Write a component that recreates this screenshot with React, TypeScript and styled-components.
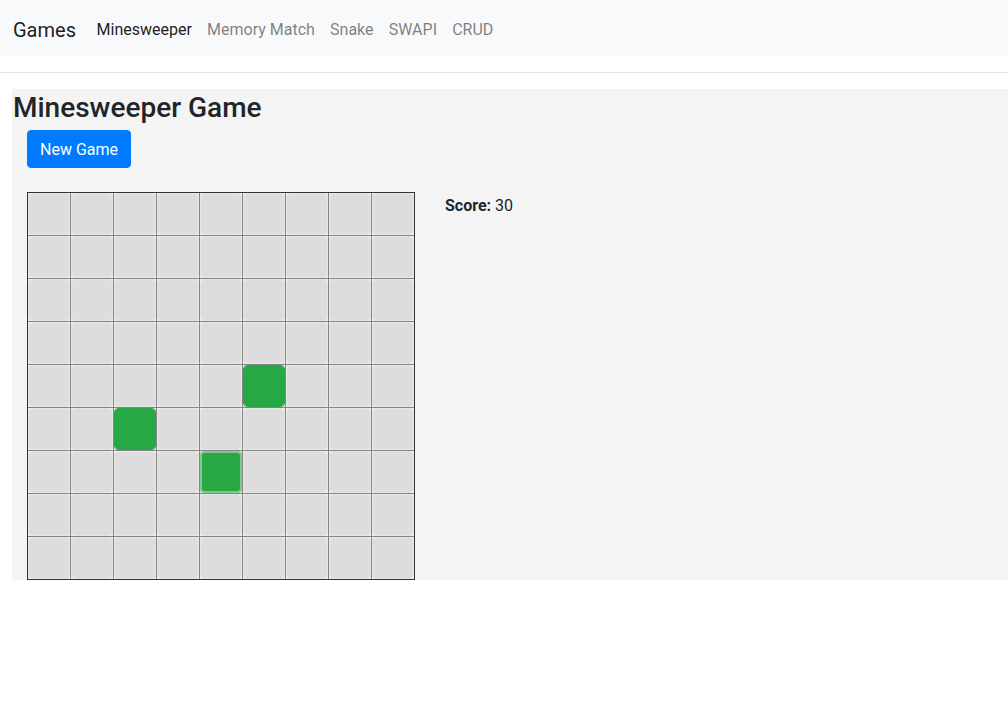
import styled, { createGlobalStyle } from "styled-components";

const GlobalStyle = createGlobalStyle`
  body {
    margin: 0;
    background: #fff;
    font-family: Roboto, "Open Sans", sans-serif;
    color: #212529;
    font-size: 16px;
    line-height: 1.5;
  }
`;

const Navbar = styled.nav`
  height: 56px;
  background: #f8f9fa;
  display: flex;
  align-items: center;
  padding: 3px 13px 0;
  box-sizing: border-box;
`;

const Brand = styled.a`
  font-size: 20px;
  line-height: 30px;
  color: rgba(0, 0, 0, 0.9);
  margin-right: 13px;
`;

const NavLinks = styled.ul`
  list-style: none;
  margin: 0;
  padding: 0;
  display: flex;
`;

const NavLink = styled.li<{ $active?: boolean }>`
  padding: 8px 7.6px;
  color: ${(p) => (p.$active ? "rgba(0, 0, 0, 0.9)" : "rgba(0, 0, 0, 0.5)")};
`;

const Rule = styled.hr`
  margin: 16px 0;
  border: 0;
  border-top: 1px solid rgba(0, 0, 0, 0.1);
`;

const Panel = styled.main`
  margin-left: 12px;
  background: #f4f4f4;
`;

const Title = styled.h2`
  margin: 0 0 3px;
  padding-left: 1px;
  font-size: 28px;
  font-weight: 500;
  line-height: 38px;
`;

const Body = styled.div`
  padding: 0 15px;
`;

const Button = styled.button`
  font-family: inherit;
  font-size: 16px;
  line-height: 24px;
  padding: 7px 12px 5px;
  color: #fff;
  background: #007bff;
  border: 1px solid #007bff;
  border-radius: 4px;
  margin-bottom: 24px;
`;

const Row = styled.div`
  display: flex;
  align-items: flex-start;
  gap: 30px;
`;

const Board = styled.div`
  display: grid;
  grid-template-columns: repeat(9, 42px);
  grid-auto-rows: 42px;
  gap: 1px;
  background: #858585;
  border: 1px solid #333;
`;

const Cell = styled.div`
  background: #f0f0f0;
  display: flex;
`;

const Tile = styled.div<{ $open?: boolean; $focused?: boolean }>`
  flex: 1;
  box-sizing: border-box;
  border-radius: 4px;
  border: ${(p) => (p.$focused ? "2px" : "1px")} solid
    ${(p) => (p.$focused ? "rgba(40, 167, 69, 0.55)" : p.$open ? "#28a745" : "#e6e6e6")};
  background: ${(p) => (p.$open ? "#28a745" : "#dddddd")};
  background-clip: padding-box;
`;

const Score = styled.div`
  padding-top: 2px;
  font-size: 16px;
`;

const open: Record<string, boolean> = { "4-5": true, "5-2": true, "6-4": true };

const App = () => {
  const cells = [];
  for (let r = 0; r < 9; r++) {
    for (let c = 0; c < 9; c++) {
      const key = `${r}-${c}`;
      cells.push(
        <Cell key={key}>
          <Tile $open={open[key]} $focused={key === "6-4"} />
        </Cell>
      );
    }
  }
  return (
    <>
      <GlobalStyle />
      <Navbar>
        <Brand>Games</Brand>
        <NavLinks>
          <NavLink $active>Minesweeper</NavLink>
          <NavLink>Memory Match</NavLink>
          <NavLink>Snake</NavLink>
          <NavLink>SWAPI</NavLink>
          <NavLink>CRUD</NavLink>
        </NavLinks>
      </Navbar>
      <Rule />
      <Panel>
        <Title>Minesweeper Game</Title>
        <Body>
          <Button>New Game</Button>
          <Row>
            <Board>{cells}</Board>
            <Score>
              <b>Score:</b> 30
            </Score>
          </Row>
        </Body>
      </Panel>
    </>
  );
};

export default App;
